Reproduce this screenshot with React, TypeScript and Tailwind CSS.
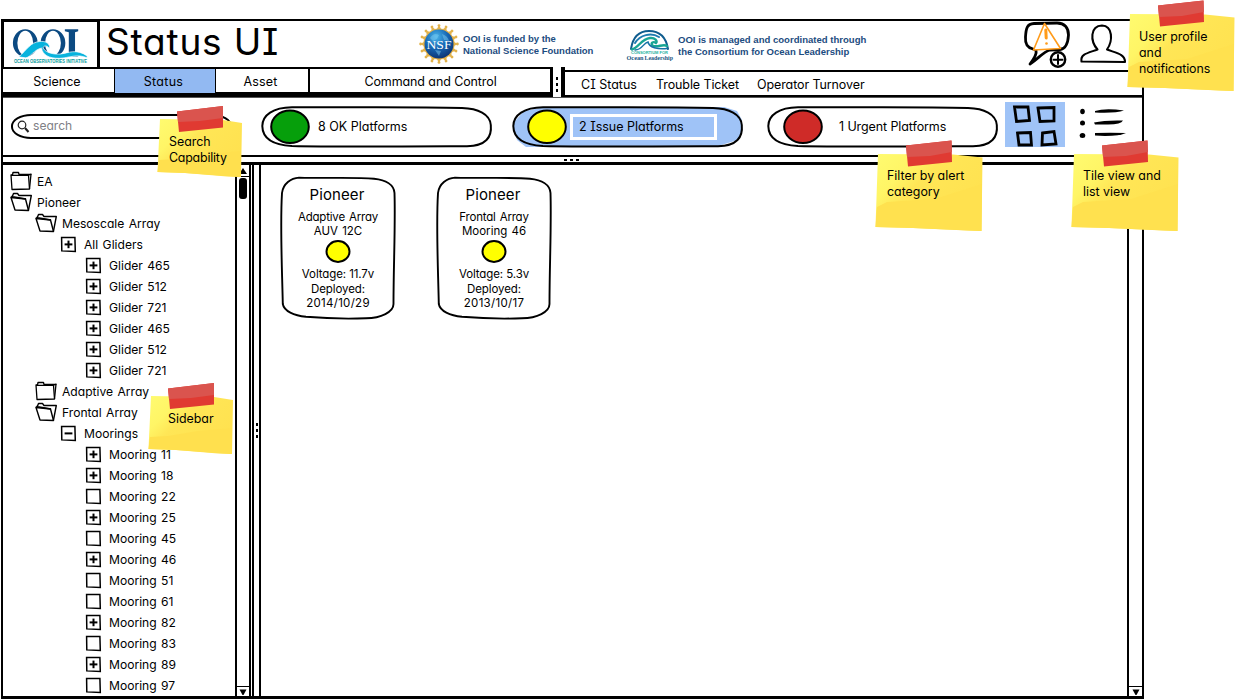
import type { ReactNode } from "react";

type IconKind = "folder" | "open" | "plus" | "minus" | "box";

const tree: { label: string; icon: IconKind; level: number }[] = [
  { label: "EA", icon: "folder", level: 0 },
  { label: "Pioneer", icon: "open", level: 0 },
  { label: "Mesoscale Array", icon: "open", level: 1 },
  { label: "All Gliders", icon: "plus", level: 2 },
  { label: "Glider 465", icon: "plus", level: 3 },
  { label: "Glider 512", icon: "plus", level: 3 },
  { label: "Glider 721", icon: "plus", level: 3 },
  { label: "Glider 465", icon: "plus", level: 3 },
  { label: "Glider 512", icon: "plus", level: 3 },
  { label: "Glider 721", icon: "plus", level: 3 },
  { label: "Adaptive Array", icon: "folder", level: 1 },
  { label: "Frontal Array", icon: "open", level: 1 },
  { label: "Moorings", icon: "minus", level: 2 },
  { label: "Mooring 11", icon: "plus", level: 3 },
  { label: "Mooring 18", icon: "plus", level: 3 },
  { label: "Mooring 22", icon: "box", level: 3 },
  { label: "Mooring 25", icon: "plus", level: 3 },
  { label: "Mooring 45", icon: "box", level: 3 },
  { label: "Mooring 46", icon: "plus", level: 3 },
  { label: "Mooring 51", icon: "box", level: 3 },
  { label: "Mooring 61", icon: "box", level: 3 },
  { label: "Mooring 82", icon: "plus", level: 3 },
  { label: "Mooring 83", icon: "box", level: 3 },
  { label: "Mooring 89", icon: "plus", level: 3 },
  { label: "Mooring 97", icon: "box", level: 3 },
];

const indent = ["pl-[7px]", "pl-[32px]", "pl-[54px]", "pl-[79px]"];

function TreeIcon({ kind }: { kind: IconKind }) {
  if (kind === "folder") {
    return (
      <svg width="22" height="21" viewBox="0 0 22 21" fill="none" stroke="#000" strokeWidth="1.300" strokeLinejoin="round" className="shrink-0">
        <path d="M1 4 L2 18.500 L19.500 18 L21 3.300 L9 3.500 L8.500 1.500 L3 1.500 L2.500 4 Z" />
        <path d="M1 4.300 L18.500 4.300 L19.500 18 M18.600 4 L21.500 3" />
      </svg>
    );
  }
  if (kind === "open") {
    return (
      <svg width="22" height="21" viewBox="0 0 22 21" fill="none" stroke="#000" strokeWidth="1.400" strokeLinejoin="round" className="shrink-0">
        <path d="M5 18 L1 5.500 L15.500 7 L18.500 18.500 Z" />
        <path d="M1 5.500 L2.500 4 L3.500 1.500 L7.500 1.500 L9 3.500 L21.300 3.500 L18.500 18 M1.500 4.500 L16 7" />
      </svg>
    );
  }
  return (
    <svg width="22" height="21" viewBox="0 0 22 21" fill="none" stroke="#000" className="shrink-0">
      <path d="M4.600 3.600 L17.900 3.400 L18.300 17.400 L4.800 16.900 Z" strokeWidth="1.500" />
      {kind !== "box" && <path d="M7.600 10.400 H15.400" strokeWidth="2" />}
      {kind === "plus" && <path d="M11.500 6.600 V14.200" strokeWidth="2" />}
    </svg>
  );
}

function OoiLogo() {
  return (
    <svg width="94" height="46" viewBox="4 21 94 46">
      <g fill="#0b4a82" fillRule="evenodd">
        <path d="M13 42 A12.500 14 0 1 1 38 42 A12.500 14 0 1 1 13 42 Z M17.500 42 A8 12.300 0 1 0 33.500 42 A8 12.300 0 1 0 17.500 42 Z" />
        <path d="M41 42 A12.500 14 0 1 1 66 42 A12.500 14 0 1 1 41 42 Z M45.500 42 A8 12.300 0 1 0 61.500 42 A8 12.300 0 1 0 45.500 42 Z" />
        <path d="M65.500 28 H79 V30 L75.800 31 V52 L79 54 V55.500 H66 L69.500 52 V31 L65.500 30 Z" />
      </g>
      <path
        d="M19 56 C27 49 31 41 40 40.500 C46 39.500 51 43 50 47.500 C47 43.500 43.500 45 43.500 47 C46 52 55 54 62 53 C69 52 77 47.500 88 55 L88 57 C78 52.500 70 57 60 57.500 C49 57.500 43 54 42 47 C34 49 31 56 26 57 Z"
        fill="#08b3dd"
        stroke="#fff"
        strokeWidth="0.700"
      />
      <text x="14" y="62.600" fontSize="4.600" fontWeight="bold" fontFamily="Liberation Sans, sans-serif" fill="#0a9c9c" textLength="74" lengthAdjust="spacingAndGlyphs">
        OCEAN OBSERVATORIES INITIATIVE
      </text>
    </svg>
  );
}

function NsfLogo() {
  const rays = Array.from({ length: 16 }, (_, i) => i * 22.5);
  return (
    <svg width="40" height="42" viewBox="-20 -21 40 42">
      <defs>
        <radialGradient id="globe" cx="40%" cy="25%" r="80%">
          <stop offset="0" stopColor="#49b5ea" />
          <stop offset="0.500" stopColor="#1767b4" />
          <stop offset="1" stopColor="#0b2f6e" />
        </radialGradient>
      </defs>
      <g fill="#e3b24a">
        {rays.map((r) => (
          <g key={r} transform={`rotate(${r})`}>
            <path d="M-2.600 -14 L0 -19 L2.600 -14 Z" />
            <circle cy="-18.400" r="1.400" />
          </g>
        ))}
        <circle r="15.600" />
      </g>
      <circle r="14.500" fill="url(#globe)" />
      <path d="M-9 -6 Q-5 -12 0 -9 L-2 -5 L-6 -3 Z M3 -10 Q9 -8 10 -3 L5 -4 Z M-4 6 L2 7 L0 12 Z" fill="#7ccaf0" opacity="0.500" />
      <text x="0" y="4.500" textAnchor="middle" fontSize="13" fontFamily="Liberation Serif, serif" fill="#fff" textLength="25" lengthAdjust="spacingAndGlyphs">
        NSF
      </text>
    </svg>
  );
}

function LeadershipLogo() {
  return (
    <svg width="48" height="34" viewBox="0 0 48 34">
      <g fill="none" strokeLinecap="round">
        <path d="M5 20 C7 7 14 2 23 2 C33 2 40 8 42 20" stroke="#0f5c8e" strokeWidth="2" />
        <path d="M9 14 C14 6 25 3 33 8" stroke="#1f7bb0" strokeWidth="2" />
        <path d="M6 20.500 C13 18.500 15 10 24 9 C29 8.500 32 12 30 14 C27 12 25 14 26 16 C30 20 37 14 41 17" stroke="#19a594" strokeWidth="2.400" />
        <path d="M9 21 C17 20.500 17 14 22 13 C23 18.500 32 20.500 41 19.500" stroke="#1672a6" strokeWidth="1.500" />
      </g>
      <text x="5" y="24.700" fontSize="3.600" fontWeight="bold" fontFamily="Liberation Sans, sans-serif" fill="#22b2a0" textLength="37" lengthAdjust="spacingAndGlyphs">
        CONSORTIUM FOR
      </text>
      <text x="0.500" y="30.800" fontSize="6.200" fontWeight="bold" fontFamily="Liberation Serif, serif" fill="#17557f" textLength="17" lengthAdjust="spacingAndGlyphs">
        Ocean
      </text>
      <text x="18.500" y="31.300" fontSize="6.200" fontWeight="bold" fontFamily="Liberation Serif, serif" fill="#17557f" textLength="28.500" lengthAdjust="spacingAndGlyphs">
        Leadership
      </text>
    </svg>
  );
}

function HeaderIcons() {
  return (
    <svg width="110" height="50" viewBox="1020 20 110 50" fill="none" stroke="#000" strokeLinejoin="round" strokeLinecap="round">
      <path d="M1033 50 C1027 48.500 1025 45 1025.500 38 C1026 29 1027 25 1034 24.500 L1057 24 C1065 24 1068.500 29 1068.500 36 C1068 44 1066 50 1060 50.500 L1050 51 C1043 53 1038 60 1030 65 C1034 60 1037 55 1036 51 Z" strokeWidth="2.800" />
      <path d="M1044.500 24.500 L1033.500 51 L1060.500 49.500 Z" fill="#fff" stroke="#ff9b1a" strokeWidth="1.600" />
      <path d="M1045.800 31 L1046.200 39" stroke="#ff9b1a" strokeWidth="3" />
      <circle cx="1046.500" cy="44.500" r="1.300" fill="#ff9b1a" stroke="none" />
      <circle cx="1058" cy="60.500" r="7.200" fill="#fff" strokeWidth="2.400" />
      <path d="M1053.500 60.700 H1062.500 M1058 56 V65" strokeWidth="2" />
      <path d="M1081.500 62.500 C1080 55 1088 54 1097.500 50.500 C1090 42 1090 27 1102 26.500 C1113 27 1113 42 1107 50.500 C1116 54 1125 55 1125 63 Z" strokeWidth="2.100" />
    </svg>
  );
}

function Pill({ label, color, active, dot, gap }: { label: string; color: string; active?: boolean; dot: string; gap: string }) {
  return (
    <div className="relative h-[42px] w-[232px] shrink-0">
      <svg className="absolute inset-0" width="232" height="42" viewBox="0 0 232 42" fill="none">
        {active && <path d="M3 15 L12 5 L31 1.500 L212 1 L225 5 L230 14 L230 24 L226 34 L206 40 L14 41 L5 34 L1 22 Z" fill="#9fc3f7" />}
        <path d="M31 1.300 C90 1.500 150 0.600 201 2 C217 2.500 229 8 229.800 19 C231 31 225 40 206 40.300 C150 40 90 41.300 31 40 C12 39 1.500 32 1.300 20 C1.500 9 12 1.500 31 1.300 Z" stroke="#000" strokeWidth="2" />
      </svg>
      <div className={`relative flex h-full items-center ${dot}`}>
        <svg width="40" height="36" viewBox="0 0 40 36" className="-mt-px shrink-0">
          <ellipse cx="20" cy="17.800" rx="18.800" ry="16.300" fill={color} stroke="#000" strokeWidth="2" />
        </svg>
        {active ? (
          <div className="-mt-px ml-[3px] flex h-[26px] w-[147px] items-center border-[3px] border-white bg-[#9fc3f7] pt-px pl-[6px]">
            <span>{label}</span>
          </div>
        ) : (
          <span className={gap}>{label}</span>
        )}
      </div>
    </div>
  );
}

function Tile({ lines, volt, date }: { lines: [string, string]; volt: string; date: string }) {
  return (
    <div className="relative h-[144px] w-[116px] shrink-0">
      <svg className="absolute inset-0" width="116" height="144" viewBox="0 0 116 144" fill="none" stroke="#000" strokeWidth="1.900">
        <path d="M19 1.600 C50 2.500 75 1 94 2.800 C106 4 114 9 114.500 17 C115.500 50 113.500 90 113.500 128 C113.500 136 101 142 86 142.300 C65 143 40 142 26 140.800 C14 139.500 4 135 2.800 128 C2 90 0 50 2 17 C3 8 11 2 19 1.600 Z" />
      </svg>
      <div className="relative flex flex-col items-center pt-[8px] text-[11.5px] leading-[14px] whitespace-nowrap">
        <div className="pr-[2px] text-[15px] leading-[22px] tracking-[0.1px]">Pioneer</div>
        <div className="mt-[4px] tracking-[-0.2px] [word-spacing:1px]">{lines[0]}</div>
        <div className="[word-spacing:1px]">{lines[1]}</div>
        <svg width="28" height="26" viewBox="0 0 28 26" className="mt-px">
          <ellipse cx="14" cy="12.500" rx="11.500" ry="10.400" fill="#ff0" stroke="#000" strokeWidth="2" />
        </svg>
        <div className="mt-[2px] tracking-[-0.1px]">{volt}</div>
        <div className="mt-px tracking-[-0.1px]">Deployed:</div>
        <div className="tracking-[0.3px]">{date}</div>
      </div>
    </div>
  );
}

function Note({ place, small, children }: { place: string; small?: boolean; children: ReactNode }) {
  const id = small ? "paper-small" : "paper-large";
  return (
    <div className={`absolute text-[12.4px] leading-4 whitespace-nowrap ${place}`}>
      <svg className="absolute top-0 left-0" width="110" height="94" viewBox="0 0 110 94">
        <defs>
          <linearGradient id={id} x1="0" y1="0" x2="1" y2="0.700">
            <stop offset="0" stopColor="#fffb70" />
            <stop offset="0.280" stopColor="#fff566" />
            <stop offset="0.450" stopColor="#ffe656" />
            <stop offset="1" stopColor="#ffe14f" />
          </linearGradient>
        </defs>
        {small ? (
          <>
            <path d="M3 14 L66 15 L85 18 L84 72 L70 71.500 L28 68 L0.500 67 Z" fill={`url(#${id})`} />
            <path d="M2 55 L20 54 L50 49 L84 46 L84 72 L28 68 L0.500 67 Z" fill="#ffe04e" />
            <path d="M20 6.500 L66 1 L66 22.500 L22 27 Z" fill="#e03a32" />
            <path d="M20 6.500 L66 1 L66 13 L43 16 L21 17 Z" fill="#da544e" />
          </>
        ) : (
          <>
            <path d="M3 14 L78 14.500 L107.500 17.500 L106.500 91 L92 90.500 L38 88 L0.500 87 Z" fill={`url(#${id})`} />
            <path d="M2 67 L12 62 L60 59 L107 44 L106.500 91 L38 88 L0.500 87 Z" fill="#ffe14f" />
            <path d="M31 5.500 L76.500 0.500 L77 22 L33 26.500 Z" fill="#e03a32" />
            <path d="M31 5.500 L76.500 0.500 L77 12 L55 16 L32 17 Z" fill="#da544e" />
          </>
        )}
      </svg>
      <div className="relative">{children}</div>
    </div>
  );
}

function Arrow({ up }: { up?: boolean }) {
  return (
    <svg width="10" height="8" viewBox="0 0 10 8">
      <path d={up ? "M5 1 L9 7 H1 Z" : "M1.500 1.500 H8.500 L5.500 7 H4.500 Z"} fill="#000" />
    </svg>
  );
}

export default function App() {
  return (
    <div className="relative h-[700px] w-[1236px] overflow-hidden bg-white pt-[19px] pl-px font-['Inter','Liberation_Sans',sans-serif] text-[12.5px] text-black [font-feature-settings:'cv11','cv08']">
      <div className="flex h-[680px] w-[1143px] flex-col border-2 border-b-[3px] border-black">
        <header className="flex h-[46px] shrink-0 items-center">
          <div className="flex h-full w-[97px] shrink-0 border-t border-r-[3px] border-l border-black">
            <OoiLogo />
          </div>
          <h1 className="w-[315px] self-start pl-[6px] text-[37px] leading-[41px] tracking-[0.8px] whitespace-nowrap">Status UI</h1>
          <div className="flex w-[207px] items-center gap-[4px] pl-[4px]">
            <NsfLogo />
            <p className="pt-px font-['Liberation_Sans',sans-serif] text-[9.5px] leading-[12px] font-bold whitespace-nowrap text-[#1c4c80]">
              OOI is funded by the
              <br />
              National Science Foundation
            </p>
          </div>
          <div className="flex w-[398px] items-center gap-[4px] pt-[4px] pl-[4px]">
            <LeadershipLogo />
            <p className="font-['Liberation_Sans',sans-serif] text-[9.55px] leading-[12px] font-bold whitespace-nowrap text-[#1c4c80]">
              OOI is managed and coordinated through
              <br />
              the Consortium for Ocean Leadership
            </p>
          </div>
          <HeaderIcons />
        </header>

        <nav className="flex h-[31px] shrink-0 border-b border-b-[#555] whitespace-nowrap">
          <div className="flex w-[547px] border-t-2 border-b-[5px] border-black text-center leading-[25px]">
            <div className="h-[24px] w-[111px] border-b border-black pr-[3px]">Science</div>
            <div className="h-[24px] w-[102px] border-x border-black bg-[#92b9f2] pr-[3px] tracking-[0.3px]">Status</div>
            <div className="h-[24px] w-[92px] pr-[3px] tracking-[0.2px]">Asset</div>
            <div className="h-[24px] flex-1 border-l-2 border-black pl-px tracking-[-0.1px]">Command and Control</div>
          </div>
          <div className="flex w-[15px] flex-col items-center justify-center gap-[3px] border-r-4 border-l-[3px] border-black pt-1">
            <i className="h-[3px] w-[2px] bg-black" />
            <i className="h-[3px] w-[2px] bg-black" />
            <i className="h-[3px] w-[2px] bg-black" />
          </div>
          <div className="mt-[3px] flex flex-1 border-t-2 border-b-2 border-black pl-[16px] leading-[25px]">
            <span className="w-[75px]">CI Status</span>
            <span className="w-[101px] tracking-[-0.1px]">Trouble Ticket</span>
            <span className="tracking-[-0.1px]">Operator Turnover</span>
          </div>
        </nav>

        <section className="flex h-[57px] shrink-0 items-start whitespace-nowrap">
          <div className="mt-[16px] ml-[8px] flex h-[25px] w-[221px] shrink-0 items-center rounded-[20px/12px] border-2 border-black pl-[4px]">
            <svg width="14" height="14" viewBox="0 0 14 14" fill="none" stroke="#222">
              <circle cx="5" cy="5" r="3.800" strokeWidth="1.200" />
              <path d="M8 8 L11.500 12" strokeWidth="2" />
            </svg>
            <span className="ml-[2px] text-[12.1px] text-[#808086]">search</span>
          </div>
          <div className="mt-[8px] ml-[29px] flex">
            <Pill label="8 OK Platforms" color="#069f0b" dot="pl-[9px]" gap="ml-[8px]" />
            <div className="ml-[19px]">
              <Pill label="2 Issue Platforms" color="#ff0" active dot="pl-[15px]" gap="" />
            </div>
            <div className="ml-[23px]">
              <Pill label="1 Urgent Platforms" color="#cf2b28" dot="pl-[16px]" gap="ml-[16px] tracking-[-0.1px]" />
            </div>
          </div>
          <div className="mt-[4px] ml-[6px] h-[45px] w-[60px] shrink-0 bg-[#9fc3f7]">
            <svg width="60" height="45" viewBox="0 0 60 45" fill="none" stroke="#000" strokeWidth="2.800">
              <path d="M9.500 5 L23 4.800 L24.500 18.500 L11.500 19.500 Z" />
              <path d="M33 6 L49 5.500 L49 19 L35 19.500 Z" />
              <path d="M12.500 31 L25.500 30.500 L26.500 43 L14 43 Z" />
              <path d="M37.500 31 L49 29.500 L51 42 L37 43 Z" />
            </svg>
          </div>
          <svg width="56" height="45" viewBox="0 0 56 45" className="mt-[4px] ml-[10px] shrink-0">
            <g fill="#000">
              <ellipse cx="7.500" cy="9.500" rx="2.300" ry="2.800" />
              <ellipse cx="7.500" cy="21" rx="2.500" ry="2.500" />
              <ellipse cx="7.500" cy="33.500" rx="2.800" ry="2.500" />
              <path d="M20 9 Q30 6 49 8.500 Q40 11.500 20 10.500 Z" />
              <path d="M19 20.500 Q30 18 48 18.500 Q46 23 30 22.500 L20 22.500 Z" />
              <path d="M20 31 Q35 30.500 51 31 Q45 34 30 34 L20 33.500 Z" />
            </g>
          </svg>
        </section>

        <div className="flex h-[10px] shrink-0 items-center justify-center gap-[3px] border-t-2 border-b-[3px] border-black pr-[2px]">
          <i className="h-[2px] w-[3px] bg-black" />
          <i className="h-[2px] w-[3px] bg-black" />
          <i className="h-[2px] w-[3px] bg-black" />
        </div>

        <div className="flex min-h-0 flex-1">
          <aside className="w-[232px] shrink-0 overflow-hidden pt-[6px]">
            {tree.map((n, i) => (
              <div key={i} className={`flex h-[21px] items-center gap-[5px] text-[12.1px] whitespace-nowrap [word-spacing:1px] ${indent[n.level]}`}>
                <TreeIcon kind={n.icon} />
                <span className="pt-[2px]">{n.label}</span>
              </div>
            ))}
          </aside>
          <div className="flex w-[16px] shrink-0 flex-col items-center border-r-2 border-l-2 border-black">
            <div className="flex h-[12px] w-full items-center justify-center border-b border-black">
              <Arrow up />
            </div>
            <div className="mt-px h-[21px] w-[8px] rounded-[3px] bg-black" />
            <div className="flex-1" />
            <div className="flex h-[10px] w-full items-center justify-center border-t border-black">
              <Arrow />
            </div>
          </div>
          <div className="ml-px flex w-[9px] shrink-0 flex-col items-center justify-center gap-[3px] border-r-2 border-l-2 border-black">
            <i className="h-[3px] w-[2px] bg-black" />
            <i className="h-[3px] w-[2px] bg-black" />
            <i className="h-[3px] w-[2px] bg-black" />
          </div>
          <main className="flex flex-1 gap-[40px] pt-[11px] pl-[19px]">
            <Tile lines={["Adaptive Array", "AUV 12C"]} volt="Voltage: 11.7v" date="2014/10/29" />
            <Tile lines={["Frontal Array", "Mooring 46"]} volt="Voltage: 5.3v" date="2013/10/17" />
          </main>
          <div className="flex w-[15px] shrink-0 flex-col justify-end border-l-2 border-black">
            <div className="flex h-[10px] items-center justify-center border-t border-black">
              <Arrow />
            </div>
          </div>
        </div>
      </div>

      <Note place="left-[1127px] top-0 h-[94px] pl-[12px] pt-[29px]">
        User profile
        <br />
        and
        <br />
        <span className="tracking-[-0.1px]">notifications</span>
      </Note>
      <Note place="left-[1071px] top-[140px] h-[94px] pl-[12px] pt-[28px]">
        Tile view and
        <br />
        list view
      </Note>
      <Note place="left-[875px] top-[140px] h-[94px] pl-[12px] pt-[28px]">
        Filter by alert
        <br />
        category
      </Note>
      <Note small place="left-[157px] top-[105px] h-[76px] pl-[12px] pt-[29px]">
        Search
        <br />
        <span className="tracking-[-0.2px]">Capability</span>
      </Note>
      <Note small place="left-[148px] top-[382px] h-[76px] pl-[20px] pt-[29px]">
        Sidebar
      </Note>
    </div>
  );
}
